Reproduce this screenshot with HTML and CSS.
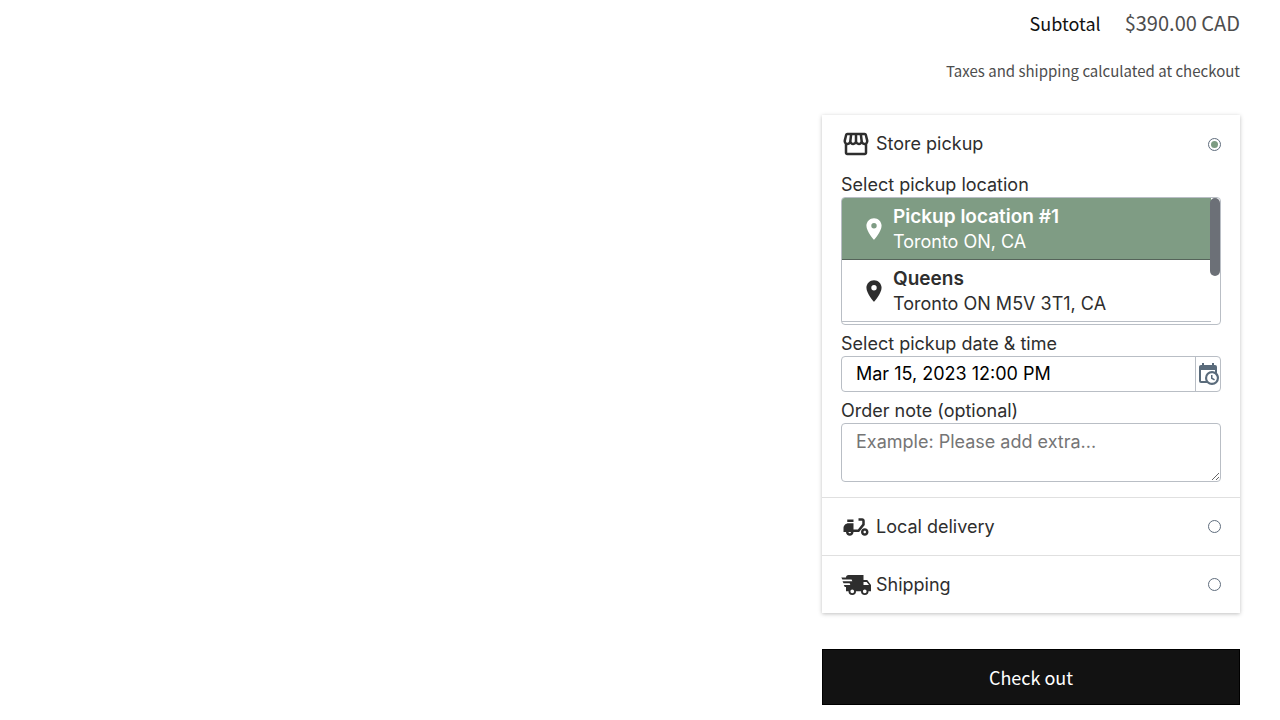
FILE: index.html
```html
<!DOCTYPE html>
<html lang="en">
<head>
<meta charset="utf-8">
<meta name="viewport" content="width=device-width, initial-scale=1">
<title>Cart</title>
<link rel="stylesheet" href="styles.css">
</head>
<body>
<main class="cart-footer">
  <div class="totals">
    <h2 class="totals-label">Subtotal</h2>
    <p class="totals-value">$390.00 CAD</p>
  </div>
  <p class="tax-note">Taxes and shipping calculated at checkout</p>

  <form class="methods">
    <section class="method">
      <label class="method-head">
        <svg class="method-icon" viewBox="0 0 24 24" aria-hidden="true"><path d="M21.9 8.89l-1.05-4.37c-.22-.9-1-1.52-1.91-1.52H5.05c-.9 0-1.69.63-1.9 1.52L2.1 8.89c-.24 1.02-.02 2.06.62 2.88.08.11.19.19.28.29V19c0 1.1.9 2 2 2h14c1.1 0 2-.9 2-2v-6.94c.09-.09.2-.18.28-.28.64-.82.87-1.87.62-2.89zm-2.99-3.9l1.05 4.37c.1.42.01.84-.25 1.17-.14.18-.44.47-.94.47-.61 0-1.14-.49-1.21-1.14L16.98 5l1.93-.01zM13 5h1.96l.54 4.52c.05.39-.07.78-.33 1.07-.22.26-.54.41-.95.41-.67 0-1.22-.59-1.22-1.31V5zM8.49 9.52L9.04 5H11v4.69c0 .72-.55 1.31-1.29 1.31-.34 0-.65-.15-.89-.41-.25-.29-.37-.68-.33-1.07zm-4.45-.16L5.05 5h1.97l-.58 4.86c-.08.65-.6 1.14-1.21 1.14-.49 0-.8-.29-.93-.47-.27-.32-.36-.75-.26-1.17zM5 19v-6.03c.08.01.15.03.23.03.87 0 1.66-.36 2.24-.95.6.6 1.4.95 2.31.95.87 0 1.65-.36 2.23-.93.59.57 1.39.93 2.29.93.84 0 1.64-.35 2.24-.95.58.59 1.37.95 2.24.95.08 0 .15-.02.23-.03V19H5z"/></svg>
        <span class="method-name">Store pickup</span>
        <input class="method-radio" type="radio" name="method" checked>
      </label>
      <div class="method-body">
        <div class="field">
          <span class="field-label" id="location-label">Select pickup location</span>
          <div class="locations" role="group" aria-labelledby="location-label">
            <div class="locations-list">
              <button type="button" class="location location-selected" aria-pressed="true">
                <svg class="pin" viewBox="0 0 24 24" aria-hidden="true"><path d="M12 2C8.13 2 5 5.13 5 9c0 5.25 7 13 7 13s7-7.75 7-13c0-3.87-3.13-7-7-7zm0 9.5a2.5 2.5 0 0 1 0-5 2.5 2.5 0 0 1 0 5z"/></svg>
                <span class="location-text"><strong class="location-name">Pickup location #1</strong><span>Toronto ON, CA</span></span>
              </button>
              <button type="button" class="location" aria-pressed="false">
                <svg class="pin" viewBox="0 0 24 24" aria-hidden="true"><path d="M12 2C8.13 2 5 5.13 5 9c0 5.25 7 13 7 13s7-7.75 7-13c0-3.87-3.13-7-7-7zm0 9.5a2.5 2.5 0 0 1 0-5 2.5 2.5 0 0 1 0 5z"/></svg>
                <span class="location-text"><strong class="location-name">Queens</strong><span>Toronto ON M5V 3T1, CA</span></span>
              </button>
            </div>
            <span class="scroll-thumb"></span>
          </div>
        </div>
        <div class="field">
          <label class="field-label" for="pickup-date">Select pickup date &amp; time</label>
          <div class="date-group">
            <input class="date-input" id="pickup-date" type="text" value="Mar 15, 2023 12:00 PM">
            <button class="date-button" type="button" aria-label="Open calendar">
              <svg class="date-icon" viewBox="0 0 24 24" aria-hidden="true"><path d="M15 13h1.5v2.82l2.44 1.41-.75 1.3L15 16.69V13m4-5H5v11h4.67c-.43-.91-.67-1.93-.67-3a7 7 0 0 1 7-7c1.07 0 2.09.24 3 .67V8M5 21a2 2 0 0 1-2-2V5c0-1.11.89-2 2-2h1V1h2v2h8V1h2v2h1a2 2 0 0 1 2 2v6.1c1.24 1.26 2 2.99 2 4.9a7 7 0 0 1-7 7c-1.91 0-3.64-.76-4.9-2H5m11-9.85A4.85 4.85 0 0 0 11.15 16c0 2.68 2.17 4.85 4.85 4.85A4.85 4.85 0 0 0 20.85 16c0-2.68-2.17-4.85-4.85-4.85z"/></svg>
            </button>
          </div>
        </div>
        <div class="field">
          <label class="field-label" for="order-note">Order note (optional)</label>
          <textarea class="note" id="order-note" placeholder="Example: Please add extra..."></textarea>
        </div>
      </div>
    </section>
    <section class="method">
      <label class="method-head">
        <svg class="method-icon" viewBox="0 0 24 24" aria-hidden="true"><path fill-rule="evenodd" d="M19 7c0-1.1-.9-2-2-2h-3v2h3v2.65L13.52 14H10V9H6c-2.21 0-4 1.79-4 4v3h2c0 1.66 1.34 3 3 3s3-1.34 3-3h4.48L19 10.35V7zM7 17c-.55 0-1-.45-1-1h2c0 .55-.45 1-1 1zM5 6h5v2H5zM19 13c-1.66 0-3 1.34-3 3s1.34 3 3 3 3-1.34 3-3-1.34-3-3-3zm0 4c-.55 0-1-.45-1-1s.45-1 1-1 1 .45 1 1-.45 1-1 1z"/></svg>
        <span class="method-name">Local delivery</span>
        <input class="method-radio" type="radio" name="method">
      </label>
    </section>
    <section class="method">
      <label class="method-head">
        <svg class="method-icon" viewBox="0 0 24 24" aria-hidden="true"><path fill-rule="evenodd" d="M3 13.5L2.25 12H7.5l-.6-1.5H2L1.25 9h7.8l-.6-1.5H1.11L.25 6H4a2 2 0 0 1 2-2h12v4h3l3 4v5h-2a3 3 0 0 1-6 0h-4a3 3 0 0 1-6 0H4v-3.5H3m16 5a1.5 1.5 0 0 0 0-3 1.5 1.5 0 0 0 0 3M20.5 9.5H18V12h4.46L20.5 9.5M9 18.5a1.5 1.5 0 0 0 0-3 1.5 1.5 0 0 0 0 3z"/></svg>
        <span class="method-name">Shipping</span>
        <input class="method-radio" type="radio" name="method">
      </label>
    </section>
  </form>

  <button class="checkout" type="button">Check out</button>
</main>
</body>
</html>
```
FILE: styles.css
```css
* {
  box-sizing: border-box;
}

body {
  margin: 0;
  background: #fff;
  color: #2e2e2e;
  font-family: Inter, "Liberation Sans", sans-serif;
  font-size: 18px;
  line-height: 24px;
}

button,
input,
textarea {
  margin: 0;
  font: inherit;
  color: inherit;
}

.cart-footer {
  display: flex;
  flex-direction: column;
  width: 100%;
  max-width: 498px;
  margin-left: auto;
  padding: 8px 40px 14px;
}

.totals,
.tax-note,
.checkout {
  font-family: "Noto Sans CJK SC", "Noto Sans", sans-serif;
}

.totals {
  display: flex;
  justify-content: flex-end;
  align-items: center;
  gap: 24px;
  line-height: 30px;
}

.totals-label {
  margin: 0;
  font-size: 18px;
  font-weight: 400;
  color: #121212;
}

.totals-value {
  margin: 0;
  font-size: 20px;
  color: #4d4d4d;
}

.tax-note {
  margin: 21px 0 32px;
  font-size: 15px;
  text-align: right;
  color: #4d4d4d;
}

.methods {
  background: #fff;
  box-shadow: 0 1px 4px rgba(0, 0, 0, 0.25);
}

.method + .method {
  border-top: 1px solid #e0e0e0;
}

.method-head {
  display: flex;
  align-items: center;
  gap: 5px;
  min-height: 58px;
  padding: 0 19px;
}

.method + .method .method-head {
  min-height: 57px;
}

.method-icon {
  flex: none;
  width: 30px;
  height: 30px;
  fill: #2e2e2e;
}

.method-name {
  flex: 1;
}

.method-radio {
  appearance: none;
  flex: none;
  width: 13px;
  height: 13px;
  padding: 2px;
  border: 1px solid #5f6d7d;
  border-radius: 50%;
  background: #fff;
}

.method-radio:checked {
  background: #7d9c82 content-box;
}

.method-body {
  display: flex;
  flex-direction: column;
  gap: 7px;
  padding: 0 19px 15px;
}

.field {
  display: flex;
  flex-direction: column;
}

.locations {
  position: relative;
  height: 128px;
  border: 1px solid #b9bec5;
  border-radius: 4px;
  overflow: hidden;
}

.locations-list {
  margin-right: 9px;
}

.location {
  display: flex;
  align-items: center;
  gap: 6px;
  width: 100%;
  padding: 6px 19px 5px;
  border: 0;
  border-bottom: 1px solid #b9bec5;
  background: #fff;
  line-height: 25px;
  text-align: left;
}

.location-selected {
  border-bottom-color: #55645a;
  background: #7f9c84;
  color: #fff;
}

.location-text {
  display: flex;
  flex-direction: column;
}

.location-name {
  font-size: 19px;
  font-weight: 600;
}

.pin {
  flex: none;
  width: 26px;
  height: 26px;
  fill: currentColor;
}

.scroll-thumb {
  position: absolute;
  top: 0;
  right: 0;
  width: 10px;
  height: 78px;
  border-radius: 5px;
  background: #6c7077;
}

.date-group {
  display: flex;
  height: 36px;
  border: 1px solid #b9bec5;
  border-radius: 4px;
}

.date-input {
  flex: 1;
  min-width: 0;
  padding: 0 14px;
  border: 0;
  background: transparent;
  color: #000;
}

.date-button {
  display: flex;
  align-items: center;
  justify-content: center;
  width: 25px;
  padding: 0;
  border: 0;
  border-left: 1px solid #b9bec5;
  background: transparent;
}

.date-icon {
  flex: none;
  width: 24px;
  height: 24px;
  fill: #5a6b7b;
}

.note {
  display: block;
  width: 100%;
  height: 59px;
  padding: 6px 14px;
  border: 1px solid #b9bec5;
  border-radius: 4px;
  background: #fff;
  resize: vertical;
}

.note::placeholder {
  color: #757575;
}

.checkout {
  height: 56px;
  margin-top: 36px;
  padding: 0;
  border: 1px solid #000;
  background: #121212;
  color: #fff;
  font-size: 18px;
}
```
